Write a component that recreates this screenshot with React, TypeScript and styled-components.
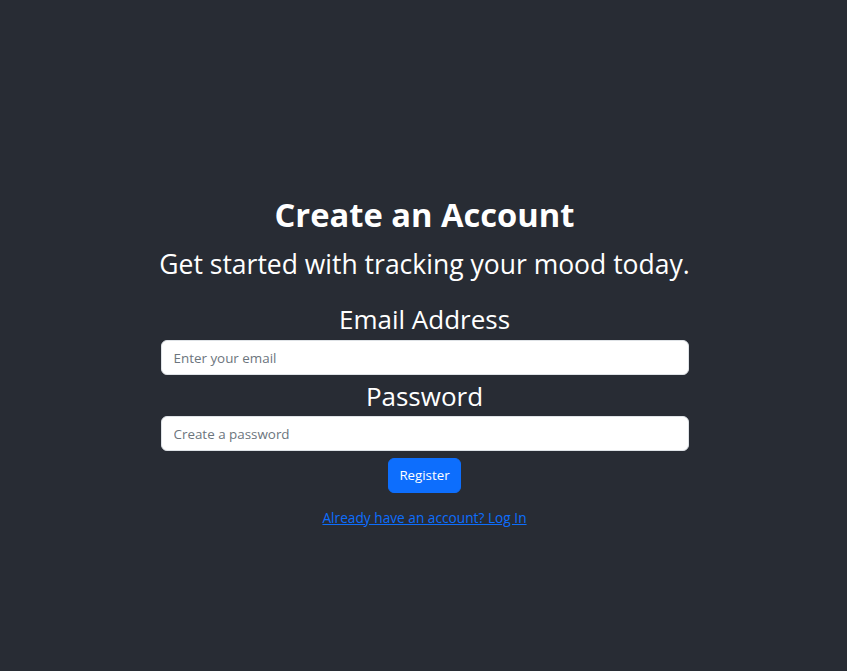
import React from "react";
import styled, { createGlobalStyle } from "styled-components";

const GlobalStyle = createGlobalStyle`
  html, body {
    margin: 0;
    padding: 0;
    background: #282c34;
  }
  body {
    font-family: "Open Sans", "Noto Sans", sans-serif;
    -webkit-font-smoothing: antialiased;
  }
  * { box-sizing: border-box; }
`;

const Page = styled.main`
  min-height: 100vh;
  display: flex;
  flex-direction: column;
  align-items: center;
  padding: 195px 0 0 2px;
  color: #ffffff;
`;

const Title = styled.h1`
  margin: 0 0 14px;
  font-size: 32.7px;
  line-height: 40px;
  font-weight: 700;
  color: #ffffff;
`;

const Subtitle = styled.h3`
  margin: 0 0 24px;
  font-size: 26.5px;
  line-height: 30px;
  font-weight: 400;
  color: #ffffff;
`;

const Form = styled.form`
  width: 528px;
  display: flex;
  flex-direction: column;
  align-items: center;
`;

const Label = styled.label<{ $first?: boolean }>`
  display: block;
  margin: ${(p) => (p.$first ? "0" : "5px")} 0 ${(p) => (p.$first ? "5px" : "4px")};
  font-size: 26px;
  line-height: 32px;
  font-weight: 400;
  color: #ffffff;
`;

const Input = styled.input`
  display: block;
  width: 100%;
  height: 35px;
  padding: 6px 12px;
  font-family: "Open Sans", "Noto Sans", sans-serif;
  font-size: 13.4px;
  line-height: 21px;
  color: #212529;
  background: #ffffff;
  border: 1px solid #dee2e6;
  border-radius: 6px;
  outline: none;
  &::placeholder {
    color: #6c757d;
    opacity: 1;
  }
`;

const Button = styled.button`
  margin-top: 7px;
  height: 35px;
  padding: 6px 10px;
  font-family: "Open Sans", "Noto Sans", sans-serif;
  font-size: 13.3px;
  line-height: 21px;
  color: #ffffff;
  background: #0d6efd;
  border: 1px solid #0d6efd;
  border-radius: 6px;
  cursor: pointer;
`;

const LinkText = styled.a`
  margin-top: 14px;
  font-size: 13.7px;
  line-height: 21px;
  color: #0d6efd;
  text-decoration: underline;
  cursor: pointer;
`;

export default function App() {
  return (
    <>
      <GlobalStyle />
      <Page>
        <Title>Create an Account</Title>
        <Subtitle>Get started with tracking your mood today.</Subtitle>
        <Form onSubmit={(e) => e.preventDefault()}>
          <Label $first htmlFor="email">Email Address</Label>
          <Input id="email" type="email" placeholder="Enter your email" />
          <Label htmlFor="password">Password</Label>
          <Input id="password" type="password" placeholder="Create a password" />
          <Button type="submit">Register</Button>
        </Form>
        <LinkText href="#login">Already have an account? Log In</LinkText>
      </Page>
    </>
  );
}
